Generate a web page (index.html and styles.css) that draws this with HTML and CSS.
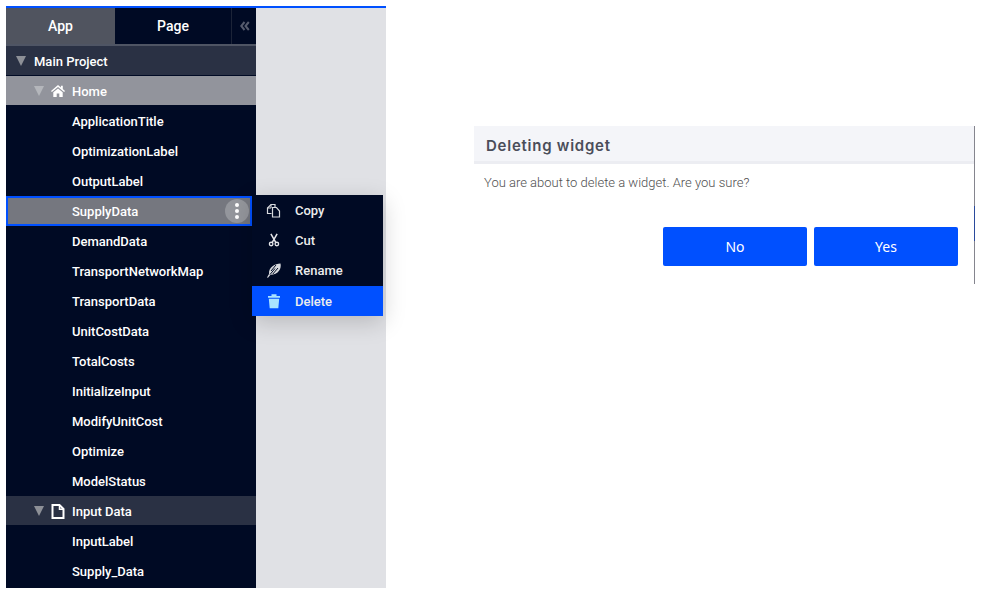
FILE: index.html
```html
<!DOCTYPE html>
<html lang="en">
<head>
    <meta charset="UTF-8">
    <meta name="viewport" content="width=device-width, initial-scale=1.0">
    <title>Deleting widget</title>
    <link rel="stylesheet" href="styles.css">
</head>
<body>
    <div class="frame">
        <div class="sidebar">
            <div class="tabs">
                <div class="tab tab-active">App</div>
                <div class="tab">Page</div>
                <div class="collapse">
                    <svg width="10" height="10" viewBox="0 0 10 10"><path d="M4.500 1 1.200 5l3.300 4M8.800 1 5.500 5l3.300 4" fill="none" stroke="#555b6d" stroke-width="2"/></svg>
                </div>
            </div>
            <div class="tree-row">
                <span class="arrow"></span>
                <span>Main Project</span>
            </div>
            <div class="tree-row home-row">
                <span class="arrow arrow-sub"></span>
                <svg class="row-icon" width="14" height="12" viewBox="0 0 14 12"><path d="M7 0 0 5.900l.9 1.100L7 1.900 13.100 7l.9-1.100-2.200-1.900V.8H9.900v1.600z" fill="#fff"/><path d="M2.300 7.300V12h3.400V8.500h2.600V12h3.400V7.300L7 3.400z" fill="#fff"/></svg>
                <span>Home</span>
            </div>
            <div class="item">ApplicationTitle</div>
            <div class="item">OptimizationLabel</div>
            <div class="item">OutputLabel</div>
            <div class="item item-selected">
                <span>SupplyData</span>
                <span class="dots"><i></i><i></i><i></i></span>
            </div>
            <div class="item">DemandData</div>
            <div class="item">TransportNetworkMap</div>
            <div class="item">TransportData</div>
            <div class="item">UnitCostData</div>
            <div class="item">TotalCosts</div>
            <div class="item">InitializeInput</div>
            <div class="item">ModifyUnitCost</div>
            <div class="item">Optimize</div>
            <div class="item">ModelStatus</div>
            <div class="tree-row">
                <span class="arrow arrow-sub"></span>
                <svg class="row-icon" width="14" height="15" viewBox="0 0 14 15"><path d="M1.500 1h7l4 4v9h-11z" fill="none" stroke="#fff" stroke-width="2"/><path d="M8.500 1v4.300h4" fill="none" stroke="#fff" stroke-width="1.500"/></svg>
                <span>Input Data</span>
            </div>
            <div class="item">InputLabel</div>
            <div class="item">Supply_Data</div>

            <div class="menu">
                <div class="menu-item">
                    <svg width="16" height="16" viewBox="0 -1 16 16"><path d="M5.500 10.500H1.500V5L5 1.500h4v3" fill="none" stroke="#d8dade" stroke-width="1.200"/><path d="M5 1.500V5H1.500" fill="none" stroke="#d8dade" stroke-width="1"/><path d="M6.500 4.500h4l3 3.500v6H6.500z" fill="none" stroke="#d8dade" stroke-width="1.200"/></svg>
                    <span>Copy</span>
                </div>
                <div class="menu-item">
                    <svg width="16" height="16" viewBox="-1 -1 18 18"><path d="M4.500 1 9.800 10.500M11.500 1 6.200 10.500" fill="none" stroke="#e4e5e9" stroke-width="1.700"/><circle cx="4.800" cy="12.500" r="2" fill="none" stroke="#e4e5e9" stroke-width="1.500"/><circle cx="11.200" cy="12.500" r="2" fill="none" stroke="#e4e5e9" stroke-width="1.500"/></svg>
                    <span>Cut</span>
                </div>
                <div class="menu-item">
                    <svg width="16" height="16" viewBox="0 0 16 16"><path d="M1 15.500 3 12C2.800 8.500 4 6 6.500 4.200 9 2.400 11.500 1.500 14.500 1.500c.6 2.500.1 5-1.300 7-2 2.900-5 4.300-8.700 4.300L2 15.800z" fill="#d8dade"/><path d="M4 12.500 9 6.500M6.800 12 12 6M10 3 5 9" stroke="#000a24" stroke-width="1" fill="none"/></svg>
                    <span>Rename</span>
                </div>
                <div class="menu-item menu-item-danger">
                    <svg width="16" height="16" viewBox="0 0 16 16"><path d="M2 3h12v1.800H2zM5.500 1.200h5V3h-5z" fill="#a9e4ff"/><path d="M2.800 5.800h10.400l-.9 9.500H3.700z" fill="#a9e4ff"/></svg>
                    <span>Delete</span>
                </div>
            </div>
        </div>
    </div>

    <div class="dialog">
        <div class="dialog-title">Deleting widget</div>
        <div class="dialog-text">You are about to delete a widget. Are you sure?</div>
        <div class="dialog-buttons">
            <button>No</button>
            <button>Yes</button>
        </div>
    </div>
</body>
</html>
```

FILE: styles.css
```css
body {
    margin: 0;
    height: 595px;
    overflow: hidden;
    display: flex;
    align-items: flex-start;
    background-color: white;
    font-family: Roboto, "Liberation Sans", sans-serif;
}
.frame {
    width: 380px;
    height: 580px;
    margin: 6px 0 0 6px;
    border-top: 2px solid #0050ff;
    background-color: #e0e1e5;
    flex-shrink: 0;
}
.sidebar {
    position: relative;
    width: 250px;
    height: 580px;
    background-color: #000a24;
    color: white;
    font-size: 13px;
    font-weight: 500;
}
.tabs {
    display: flex;
    height: 36px;
    border-bottom: 2px solid #4f5564;
    font-size: 14px;
}
.tab {
    width: 109px;
    line-height: 36px;
    text-align: center;
}
.tab + .tab {
    width: 116px;
}
.tab-active {
    background-color: #50545f;
}
.collapse {
    flex: 1;
    display: flex;
    align-items: center;
    justify-content: center;
    padding-left: 1px;
    border-left: 1px solid #1c2438;
}
.tree-row {
    display: flex;
    align-items: center;
    height: 28px;
    padding-top: 1px;
    border-bottom: 1px solid #000a24;
    background-color: #2a3144;
}
.home-row {
    background-color: #92949c;
}
.home-row .arrow {
    border-top-color: #b4b6bb;
}
.arrow {
    width: 0;
    height: 0;
    margin: 0 8px 0 10px;
    border-left: 5.5px solid transparent;
    border-right: 5.5px solid transparent;
    border-top: 10px solid #8d9097;
}
.arrow-sub {
    margin: 0 7px 0 28px;
}
.row-icon {
    margin-right: 7px;
}
.item {
    display: flex;
    align-items: center;
    height: 30px;
    padding-left: 66px;
}
.item-selected {
    box-sizing: border-box;
    width: 246px;
    padding-left: 64px;
    padding-right: 1px;
    justify-content: space-between;
    background-color: #75777f;
    border: 2px solid #0050ff;
}
.dots {
    display: flex;
    flex-direction: column;
    align-items: center;
    justify-content: center;
    gap: 2px;
    width: 24px;
    height: 24px;
    border-radius: 50%;
    background-color: #94969c;
}
.dots i {
    width: 4px;
    height: 4px;
    border-radius: 50%;
    background-color: white;
}
.menu {
    position: absolute;
    top: 187px;
    left: 246px;
    width: 131px;
    background-color: #000a24;
    box-shadow: 0 6px 22px rgba(0, 0, 0, 0.18);
}
.menu-item {
    display: flex;
    align-items: center;
    gap: 13px;
    height: 30px;
    margin-left: 4px;
    padding-left: 10px;
    color: #eceded;
}
.menu-item-danger {
    margin-top: 1px;
    margin-left: 0;
    padding-left: 14px;
    background-color: #0050ff;
}
.dialog {
    position: relative;
    box-sizing: border-box;
    width: 501px;
    height: 158px;
    margin: 126px 0 0 88px;
    border-right: 1px solid #85858e;
}
.dialog::after {
    content: "";
    position: absolute;
    top: 80px;
    right: -1px;
    width: 1px;
    height: 35px;
    background-color: #2a4a9c;
}
.dialog-title {
    height: 35px;
    padding-left: 12px;
    background-color: #f4f5f9;
    border-bottom: 3px solid #ecedf2;
    color: #4a4d59;
    font-family: Inter, "Open Sans", sans-serif;
    font-size: 15px;
    font-weight: 600;
    letter-spacing: 0.75px;
    line-height: 40px;
}
.dialog-text {
    padding: 12px 10px 0;
    color: #4f4f4f;
    font-size: 13px;
    font-weight: 300;
    line-height: 14px;
}
.dialog-buttons {
    display: flex;
    justify-content: flex-end;
    gap: 7px;
    margin-top: 37px;
    padding-right: 16px;
}
button {
    width: 144px;
    height: 39px;
    border: none;
    border-radius: 2px;
    background-color: #0050ff;
    color: white;
    font-family: "Noto Sans", sans-serif;
    font-size: 14px;
}
```
